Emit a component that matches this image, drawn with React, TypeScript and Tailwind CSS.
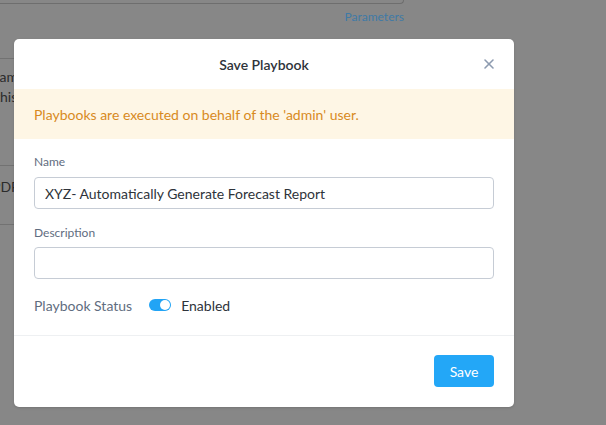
import { X } from 'lucide-react'

export default function App() {
  return (
    <div className="relative h-[425px] w-[606px] overflow-hidden bg-[#878787] font-['Lato',sans-serif]">
      {/* page behind the dialog */}
      <div className="w-[404px]">
        <div className="h-[4px] rounded-br-[5px] border-b border-r border-[#6e6e6e]"></div>
        <div className="flex justify-end pt-[6px] text-[12px] leading-[14px] text-[#3f7aa6]">Parameters</div>
        <div className="mt-[34px] border-t border-[#727272] pt-[8px] text-[14px] leading-[20px] text-[#2b2b2b]">
          <div className="-ml-[11px]">Nam</div>
          <div className="-ml-[5px]">this</div>
        </div>
        <div className="mt-[58px] border-t border-[#727272] pb-[1px] pt-[11px] text-[14px] leading-[20px] text-[#2b2b2b]">
          <div className="-ml-[8px] h-[46px]">PDF</div>
        </div>
        <div className="border-t border-[#727272]"></div>
      </div>

      {/* dialog */}
      <div className="absolute left-[14px] top-[39px] w-[500px] overflow-hidden rounded-[5px] bg-white shadow-sm">
        <div className="relative flex h-[50px] items-center justify-center">
          <span className="text-[14px] font-semibold text-[#2e333a]">Save Playbook</span>
          <button className="absolute right-[17px] top-[17px] text-[#8d9bb0]">
            <X size={16} strokeWidth={2.4} />
          </button>
        </div>
        <div className="flex h-[50px] items-center bg-[#fef6e5] px-[20px] text-[14px] text-[#d88a1e]">
          Playbooks are executed on behalf of the 'admin' user.
        </div>
        <div className="px-[20px] pb-[20px] pt-[15px]">
          <label className="block text-[12px] leading-[16px] text-[#5f6d80]">Name</label>
          <input
            readOnly
            value="XYZ- Automatically Generate Forecast Report"
            className="mt-[7px] block h-[32px] w-full rounded-[4px] border border-[#c6ccd5] px-[10px] text-[14px] text-[#2e333a] outline-none"
          />
          <label className="mt-[16px] block text-[12px] leading-[16px] text-[#5f6d80]">Description</label>
          <input
            readOnly
            className="mt-[6px] block h-[32px] w-full rounded-[4px] border border-[#c6ccd5] px-[10px] text-[14px] outline-none"
          />
          <div className="mt-[16px] flex h-[20px] items-center">
            <span className="text-[14px] text-[#5f6d80]">Playbook Status</span>
            <span className="ml-[17px] flex h-[12px] w-[22px] items-center justify-end rounded-full bg-[#22a4f5] px-[1px]">
              <span className="h-[10px] w-[10px] rounded-full bg-white"></span>
            </span>
            <span className="ml-[10px] text-[14px] text-[#2e333a]">Enabled</span>
          </div>
        </div>
        <div className="flex justify-end border-t border-[#eef0f2] px-[20px] pb-[20px] pt-[19px]">
          <button className="h-[32px] w-[60px] rounded-[4px] bg-[#23a7f7] text-[14px] text-white">Save</button>
        </div>
      </div>
    </div>
  )
}
